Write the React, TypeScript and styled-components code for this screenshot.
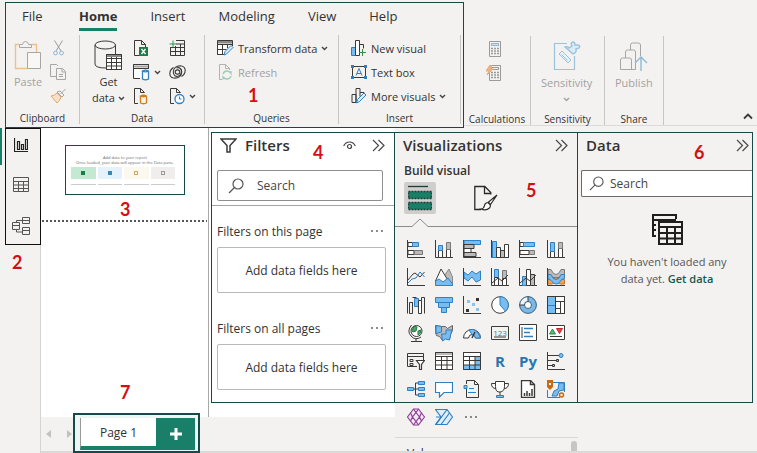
import React from "react";
import styled, { createGlobalStyle } from "styled-components";

const color = {
  chrome: "#f3f2f1",
  frame: "#17494a",
  accent: "#1a7f68",
  ink: "#333231",
  muted: "#a3a19f",
  blue: "#2f7fc1",
  fill: "#79bdf0",
  grey: "#bdbbb9",
  mark: "#d40f14",
};

const GlobalStyle = createGlobalStyle`
  *, *::before, *::after { box-sizing: border-box; }
  body { margin: 0; background: ${color.chrome}; }
  body, button, input { font-family: "Open Sans", "Noto Sans", sans-serif; font-size: 12px; color: ${color.ink}; }
  button { border: 0; padding: 0; background: none; cursor: pointer; }
  svg { display: block; flex: none; }
  h2, h3, p { margin: 0; }
`;

/* ---------- shell ---------- */

const Shell = styled.div`
  height: 100vh;
  min-height: 440px;
  display: flex;
  flex-direction: column;
  overflow: hidden;
  background: ${color.chrome};
`;

const Ribbon = styled.header`
  display: flex;
  align-items: stretch;
  height: 126px;
  margin-top: 2px;
  padding-left: 5px;
`;

const FramedRibbon = styled.div`
  position: relative;
  display: flex;
  flex-direction: column;
  width: 459px;
  border: 1px solid ${color.frame};
`;

const PlainRibbon = styled.div`
  flex: 1;
  display: flex;
  flex-direction: column;
  justify-content: flex-end;
  margin-bottom: 2px;
  border-bottom: 1px solid #dddbd9;
`;

const TabBar = styled.nav`
  display: flex;
  gap: 33px;
  height: 32px;
  padding: 0 16px;
`;

const Tab = styled.button<{ $active?: boolean }>`
  height: 28px;
  min-width: 24px;
  text-align: left;
  font-size: 13px;
  font-weight: ${(p) => (p.$active ? 700 : 400)};
  border-bottom: 3px solid ${(p) => (p.$active ? color.accent : "transparent")};
`;

const Groups = styled.div`
  display: flex;
  height: 89px;
`;

const Group = styled.section<{ $width: number }>`
  display: flex;
  flex-direction: column;
  width: ${(p) => p.$width}px;
  border-right: 1px solid #c8c6c4;
`;

const GroupBody = styled.div<{ $gap?: number; $pad?: number }>`
  flex: 1;
  display: flex;
  gap: ${(p) => p.$gap ?? 8}px;
  padding: 1px 0 0 ${(p) => p.$pad ?? 8}px;
`;

const GroupLabel = styled.div`
  height: 16px;
  font-size: 10px;
  line-height: 20px;
  text-align: center;
`;

const Stack = styled.div<{ $align?: string }>`
  display: flex;
  flex-direction: column;
  align-items: ${(p) => p.$align ?? "flex-start"};
`;

const Command = styled.button<{ $off?: boolean }>`
  display: flex;
  align-items: center;
  gap: 4px;
  height: 24px;
  font-size: 11px;
  white-space: nowrap;
  color: ${(p) => (p.$off ? color.muted : color.ink)};
`;

const BigCommand = styled.button<{ $off?: boolean }>`
  display: flex;
  flex-direction: column;
  align-items: center;
  height: 72px;
  padding-top: 4px;
  font-size: 11px;
  line-height: 16px;
  color: ${(p) => (p.$off ? color.muted : color.ink)};
  svg + span { margin-top: 4px; }
`;

const Inline = styled.span`
  display: flex;
  align-items: center;
  gap: 3px;
`;

const CaretLine = styled(Inline)`
  height: 16px;
`;

const Spacer = styled.span`
  flex: 1;
`;

const CollapseRow = styled.div`
  flex: 1;
  display: flex;
  align-items: flex-end;
  justify-content: flex-end;
  padding: 0 4px 5px;
`;

/* ---------- workspace ---------- */

const Workspace = styled.main`
  flex: 1;
  min-height: 0;
  display: flex;
`;

const Rail = styled.nav`
  width: 40px;
  padding-left: 3px;
  border-left: 2px solid transparent;
  background: linear-gradient(${color.accent}, ${color.accent}) border-box 0 0 / 2px 37px no-repeat;
`;

const RailFrame = styled.div`
  position: relative;
  display: flex;
  flex-direction: column;
  justify-content: space-between;
  align-items: center;
  width: 36px;
  height: 117px;
  padding: 9px 4px 9px 0;
  border: 1px solid #111;
  z-index: 1;
`;

const RailButton = styled.button`
  display: block;
`;

const Center = styled.div`
  flex: 1;
  min-width: 0;
  display: flex;
  flex-direction: column;
  border-left: 1px solid #d6d4d2;
`;

const CenterTop = styled.div`
  flex: 1;
  min-height: 0;
  display: flex;
  background: #fff;
`;

const Canvas = styled.section`
  position: relative;
  flex: 1;
  padding: 17px 23px 0 24px;
  border-right: 1px solid #a9a8a7;
`;

const Thumb = styled.div`
  display: flex;
  flex-direction: column;
  align-items: center;
  height: 50px;
  padding-top: 9px;
  border: 1px solid ${color.frame};
`;

const ThumbText = styled.p`
  font-size: 4px;
  line-height: 5px;
  color: #666;
  white-space: nowrap;
`;

const ThumbCards = styled.div`
  display: grid;
  grid-template-columns: repeat(4, 1fr);
  gap: 2px;
  align-self: stretch;
  margin: 2px 9px 2px 5px;
`;

const ThumbCard = styled.div<{ $bg: string }>`
  height: 18px;
  display: flex;
  align-items: flex-start;
  justify-content: center;
  padding-top: 4px;
  border-bottom: 1px solid #ccc;
  background: linear-gradient(${(p) => p.$bg}, ${(p) => p.$bg}) 0 0 / 100% 12px no-repeat;
`;

const Chip = styled.i<{ $c: string }>`
  width: 4px;
  height: 4px;
  border: 1px solid ${(p) => p.$c};
`;

const SolidChip = styled(Chip)`
  background: ${(p) => p.$c};
`;

const DottedRule = styled.hr`
  margin: 25px -22px 0 -23px;
  border: 0;
  height: 2px;
  background: repeating-linear-gradient(90deg, #555 0 2px, transparent 2px 4px);
`;

const BottomBar = styled.footer`
  display: flex;
  align-items: flex-end;
  height: 36px;
  border-bottom: 2px solid #dcdad8;
`;

const Arrows = styled.div`
  display: flex;
  justify-content: space-between;
  width: 32px;
  height: 34px;
  padding: 0 1px 0 5px;
  align-items: center;
`;

const PageTabs = styled.div`
  position: relative;
  display: flex;
  height: 40px;
  margin-bottom: -2px;
  padding: 3px 3px 1px 5px;
  border: 2px solid ${color.frame};
  background: #eef5f5;
`;

const PageTab = styled.button`
  width: 76px;
  background: #fff;
  border-left: 1px solid #999;
  border-bottom: 4px solid ${color.accent};
`;

const AddPage = styled.button`
  display: grid;
  place-items: center;
  width: 39px;
  background: ${color.accent};
`;

/* ---------- panes ---------- */

const FilterPane = styled.aside`
  width: 186px;
  padding: 4px 0 0 2px;
`;

const Frame = styled.div<{ $edge?: boolean; $bg: string }>`
  position: relative;
  height: 271px;
  border: 1px solid ${color.frame};
  border-left-width: ${(p) => (p.$edge ? 1 : 0)}px;
  background: ${(p) => p.$bg};
`;

const PaneHead = styled.div<{ $end?: number }>`
  display: flex;
  align-items: center;
  height: 24px;
  padding: 0 ${(p) => p.$end ?? 9}px 0 8px;
`;

const Title = styled.h2`
  font-size: 15px;
  font-weight: 600;
  line-height: 24px;
  svg + & { margin-left: 8px; }
`;

const HeadActions = styled.div`
  display: flex;
  align-items: center;
  gap: 16px;
`;

const Search = styled.label<{ $open?: boolean }>`
  display: flex;
  align-items: center;
  gap: ${(p) => (p.$open ? 6 : 13)}px;
  height: ${(p) => (p.$open ? 27 : 31)}px;
  margin: 13px ${(p) => (p.$open ? 0 : 11)}px 0 ${(p) => (p.$open ? 3 : 5)}px;
  padding-left: ${(p) => (p.$open ? 7 : 10)}px;
  border: 1px solid ${(p) => (p.$open ? "#6c6b6a" : "#8f8e8d")};
  border-right-width: ${(p) => (p.$open ? 0 : 1)}px;
  border-radius: ${(p) => (p.$open ? "2px 0 0 2px" : "2px")};
  background: #fff;
`;

const SearchInput = styled.input`
  flex: 1;
  min-width: 0;
  padding: 0;
  border: 0;
  outline: 0;
  background: none;
  &::placeholder { color: #444; opacity: 1; }
`;

const PaneRule = styled.hr`
  height: 1px;
  margin: 4px 0 0;
  border: 0;
  background: #a5a4a3;
`;

const FilterHead = styled.div`
  display: flex;
  align-items: center;
  justify-content: space-between;
  height: 16px;
  padding: 0 11px 0 5px;
`;

const FilterSet = styled.section`
  margin-top: 17px;
  & + & { margin-top: 27px; }
`;

const SetTitle = styled.h3`
  font-size: 12px;
  font-weight: 400;
`;

const DropZone = styled.div`
  display: grid;
  place-items: center;
  height: 46px;
  margin: 8px 8px 0 5px;
  border: 1px solid #bbb9b8;
  border-radius: 2px;
`;

const VisualPane = styled.aside`
  display: flex;
  flex-direction: column;
  width: 183px;
  padding-top: 4px;
  overflow: hidden;
  border-bottom: 2px solid #dcdad8;
`;

const BuildLabel = styled.h3`
  padding-left: 9px;
  margin-top: 4px;
  font-size: 12px;
  font-weight: 600;
  line-height: 20px;
`;

const ModeRow = styled.div`
  display: flex;
  gap: 38px;
  margin-top: 1px;
  padding-left: 9px;
`;

const Mode = styled.button<{ $active?: boolean }>`
  display: grid;
  place-items: center;
  width: ${(p) => (p.$active ? 32 : 24)}px;
  height: 32px;
  border-radius: 2px;
  background: ${(p) => (p.$active ? "#d0cecc" : "none")};
`;

const Notch = styled.div`
  display: flex;
  align-items: flex-end;
  height: 9px;
  margin-top: 4px;
  &::before, &::after { content: ""; height: 1px; background: #8d8c8b; }
  &::before { width: 17px; }
  &::after { flex: 1; }
`;

const Gallery = styled.div`
  display: grid;
  grid-template-columns: repeat(6, 18px);
  gap: 10px;
  padding: 13px 0 0 12px;
`;

const GalleryTail = styled(Gallery)`
  padding: 5px 0 11px 12px;
  border-bottom: 1px solid #dad8d6;
`;

const Tile = styled.button`
  width: 18px;
  height: 18px;
`;

const Wells = styled.div`
  flex: 1;
  display: flex;
  justify-content: space-between;
  padding: 3px 1px 0 12px;
  overflow: hidden;
`;

const WellTitle = styled.h3`
  padding-top: 4px;
  font-size: 12px;
  line-height: 18px;
  font-weight: 400;
`;

const Thumbbar = styled.div`
  width: 6px;
  height: 30px;
  border-radius: 3px;
  background: #c8c6c4;
`;

const DataPane = styled.aside`
  width: 179px;
  padding: 4px 4px 0 0;
  border-bottom: 2px solid #dcdad8;
`;

const Empty = styled.div`
  display: flex;
  flex-direction: column;
  align-items: center;
  padding: 16px 0 0 4px;
  text-align: center;
  font-size: 11px;
  line-height: 17px;
  color: #555;
`;

const EmptyText = styled.p`
  width: 140px;
  margin-top: 7px;
`;

const Link = styled.a`
  color: #17594b;
  font-weight: 600;
  text-decoration: none;
`;

/* numbered callouts laid over the regions */
const Mark = styled.span<{ $x: number; $y: number }>`
  position: absolute;
  left: ${(p) => p.$x}px;
  top: ${(p) => p.$y}px;
  font: 700 18px/20px Lato, sans-serif;
  color: ${color.mark};
`;

/* ---------- icons ---------- */

type IconProps = { w?: number; h?: number; c?: string; vb?: string; children: React.ReactNode };
const Icon = ({ w = 18, h = w, c = "#3b3a39", vb, children }: IconProps) => (
  <svg width={w} height={h} viewBox={vb ?? `0 0 ${w} ${h}`} fill="none" stroke={c} strokeWidth="1" aria-hidden="true">
    {children}
  </svg>
);

const Caret = ({ c = "#444" }: { c?: string }) => (
  <Icon w={7} h={5} c={c}><path d="M1 1l2.5 2.5L6 1" strokeWidth="1.4" /></Icon>
);
const Chevrons = () => (
  <Icon w={13} h={13} c="#4a4948"><path d="M1 1l5.500 5.500L1 12M6.500 1L12 6.500 6.500 12" strokeWidth="1.2" /></Icon>
);
const Lens = ({ s = 16 }: { s?: number }) => (
  <Icon w={s} h={s} vb="0 0 16 16" c="#555"><circle cx="10" cy="6" r="5" strokeWidth="1.2" /><path d="M6.500 9.500L1 15" strokeWidth="1.2" /></Icon>
);
const Dots = ({ w = 12 }: { w?: number }) => (
  <Icon w={w} h={4} vb="0 0 12 4"><g fill="#555" stroke="none"><circle cx="1" cy="2" r=".9" /><circle cx="6" cy="2" r=".9" /><circle cx="11" cy="2" r=".9" /></g></Icon>
);

const PasteIcon = () => (
  <Icon w={28} h={30} c="#a8a6a4">
    <path d="M5 4.500H1.500V28.500H14M18 4.500h4.500V12" stroke="#edc08f" strokeWidth="1.400" />
    <path d="M5.500 7.500V4.500h3Q9 1.500 11.500 1.500T14.500 4.500h3v3z" />
    <path d="M13.500 12.500h13v16h-13z" fill="#f8f7f6" />
  </Icon>
);
const CutIcon = () => (
  <Icon w={11} h={16} c="#9b9a99">
    <path d="M1.500 .5L8 11M9.500 .5L3 11" />
    <circle cx="2.500" cy="13" r="1.900" stroke="#8fb6d4" /><circle cx="8.500" cy="13" r="1.900" stroke="#8fb6d4" />
  </Icon>
);
const CopyIcon = () => (
  <Icon w={17} h={17} c="#a8a6a4">
    <path d="M6 12.500H.5V.5h6L8 2M6.500 4.500h6l3 3v8h-9zM12 4.500V8h3.500M9 10.500h4M9 12.500h4" />
  </Icon>
);
const BrushIcon = () => (
  <Icon w={17} h={16} c="#a8a6a4">
    <path d="M15.500 1l-5 5M7 4l5 5 2-2-4-4z" /><path d="M7 5Q4 8 1 8l6 7q3-2 4-6z" stroke="#e3a971" fill="#f6dfc6" />
  </Icon>
);
const DatabaseIcon = () => (
  <Icon w={28} h={30}>
    <path d="M1 5v19q0 4 11 4M21.500 5v9" /><ellipse cx="11.250" cy="5" rx="10.250" ry="4" />
    <path d="M12.500 14.500h15v15h-15z" fill="#fff" /><path d="M12.500 15.500h15" strokeWidth="3" stroke="#8a8987" /><path d="M12.500 14.500h15v15h-15zM12.500 18.500h15M12.500 22.500h15M12.500 26h15M17.500 17v12M22.500 17v12" />
  </Icon>
);
const ExcelIcon = () => (
  <Icon w={16} h={17}>
    <path d="M6 15.500H1.500V.5h7l4 4V7M8.500 .5v4h4" /><path d="M6 7h9v9H6z" fill="#1b7f45" stroke="none" /><path d="M8.500 9l4 5M12.500 9l-4 5" stroke="#fff" strokeWidth="1.300" />
  </Icon>
);
const HubIcon = () => (
  <Icon w={17} h={17}>
    <path d="M7 14.500H.5V.5h15V5" fill="#fff" /><path d="M1 2.500h14" stroke="#a6a4a2" strokeWidth="2" /><path d="M.5 .5h15V5M.5 4.500h15" />
    <path d="M9.500 7v8q3 1.600 6 0V7q-3-1.600-6 0q3 1.600 6 0" stroke={color.blue} fill="#fff" strokeWidth="1.300" />
  </Icon>
);
const SqlIcon = () => (
  <Icon w={16} h={17}>
    <path d="M5 15.500H1.500V.5h6l4 4M7.500 .5v4h4" /><path d="M7.500 8v7q3 1.500 6 0V8q-3-1.500-6 0q3 1.500 6 0" stroke="#d27c20" fill="#fdf1e2" strokeWidth="1.300" />
  </Icon>
);
const EnterDataIcon = () => (
  <Icon w={17} h={16}>
    <path d="M7 .5h8.500v15H1.500V7M7 4h9M2 7.500h14M2 11.500h14M6.500 6v9M11.500 4v11" /><path d="M4 .5v7M.5 4h7" stroke="#2e9348" />
  </Icon>
);
const DataverseIcon = () => (
  <Icon w={17} h={14}>
    <g strokeWidth="1.100">
      <ellipse cx="8.500" cy="7" rx="2.300" ry="2.100" />
      <path d="M12.500 1C7 .3 4.300 3.500 4.300 7s2.500 5 5.200 4 4-4.500 2.300-7" />
      <path d="M4.500 13c5.500.7 8.200-2.500 8.200-6S10.200 2 7.500 3" />
      <path d="M4.500 13C-.5 12-.3 5.500 4.500 2.500M12.500 1c5 1 4.800 7.500 0 10.500" />
    </g>
  </Icon>
);
const RecentIcon = () => (
  <Icon w={16} h={17}>
    <path d="M5 15.500H1.500V.5h6l4 4M7.500 .5v4h4" /><circle cx="10.500" cy="11" r="4.500" stroke={color.blue} fill="#fff" strokeWidth="1.300" /><path d="M10.500 8.500V11h2" stroke={color.blue} />
  </Icon>
);
const TransformIcon = () => (
  <Icon w={17} h={17}>
    <path d="M7 14.500H.5V1.500h15V6" fill="#fff" /><path d="M.5 2h15" strokeWidth="3" stroke="#8a8987" /><path d="M.5 .5h15V6M.5 .5v14H7M.5 4.500h15M.5 9.500h9M5.500 4v10M10.500 4v4" />
    <path d="M7 15l1-3.500L14 5.500l2 2-6.500 6.500z" stroke={color.blue} fill="#dcedf9" />
  </Icon>
);
const RefreshIcon = () => (
  <Icon w={17} h={17} c="#b5b3b1">
    <path d="M5 15.500H2.500V.5h6l4 4V6M8.500 .5v4h4" /><path d="M6 10q1-3 4-3 2.500 0 4 2.500V7M14 12q-1 3-4 3-2.500 0-4-2v2.500" stroke="#9dcdb2" strokeWidth="1.300" />
  </Icon>
);
const NewVisualIcon = () => (
  <Icon w={16} h={16}>
    <path d="M.5 7.500h4v8h-4z" fill={color.fill} stroke={color.blue} /><path d="M4.500 .5h4v15h-4z" fill="#fff" /><path d="M8.500 4.500h4v4M8.500 15V4.500" /><path d="M11.500 9v7M8 12.500h7" stroke="#2e9348" />
  </Icon>
);
const TextBoxIcon = () => (
  <Icon w={16} h={14}>
    <path d="M1.500 1.500h13v11h-13z" /><g fill={color.blue} stroke="none"><path d="M0 0h3v3H0zM13 0h3v3h-3zM0 11h3v3H0zM13 11h3v3h-3z" /></g><path d="M5 10.500l3-7 3 7M6 8.500h4" stroke={color.blue} />
  </Icon>
);
const MoreVisualsIcon = () => (
  <Icon w={16} h={16}>
    <path d="M5 14.500H1V6.500h4zM5 15V.5h4v8M9 4.500h4V6" /><path d="M5.500 15l1-3.500L13 5l2 2-6.500 6.500z" stroke={color.blue} fill="#dcedf9" />
  </Icon>
);
const CalcIcon = ({ quick }: { quick?: boolean }) => (
  <Icon w={15} h={17} c="#9b9a99">
    <path d="M3.500 .5h11v15h-11zM5.500 2.500h7v2h-7z" /><path d="M5 7.500h8M5 10h8M5 12.500h8" strokeDasharray="2 1" strokeWidth="1.400" />
    {quick ? <path d="M4 0L0 6h3l-2 4 6-6H4l2-4z" fill="#f0b585" stroke="#e8a874" /> : <path d="M5.500 2.500h7v2h-7z" stroke="#8fb6d4" fill="#cfe2f1" />}
  </Icon>
);
const SensitivityIcon = () => (
  <Icon w={28} h={30} c="#9cc2dc">
    <path d="M14 2.500H1.500v26h20V15" strokeWidth="1.200" /><path d="M6 13l3-3 9 9-3 3zM8.500 13.500l6 6" fill="#e6f1f9" />
    <path d="M12 6q3-1 4 1l3-2q-2-3 1-4 2 0 2 3l3 0q3 1 1 3l-3 1q1 2-1 4l-2 1z" fill="#dcecf7" strokeWidth="1.400" />
  </Icon>
);
const PublishIcon = () => (
  <Icon w={28} h={30} c="#a8a6a4">
    <path d="M.5 19q0-2 2-2h7q2 0 2 2v9.500H.5zM5.500 17v-6q0-2 2-2h6q2 0 2 2v17.500H11M10.500 9V4q0-2 2-2h6q2 0 2 2v11" /><path d="M21 30V16M15 22l6-6 6 6" stroke="#8db9d8" strokeWidth="1.400" />
  </Icon>
);

const ReportView = () => (
  <Icon w={14} h={15} c="#222"><path d="M.5 0v13.500H14M3.500 3.500h2v8h-2zM7.500 6.500h2v5h-2zM11.500 1.500h2v10h-2z" strokeWidth="1.200" /></Icon>
);
const TableView = () => (
  <Icon w={17} h={16} c="#555"><path d="M.5 .5h15v14H.5zM.5 4.500h15M.5 8h15M.5 11.500h15M5.500 4v11M10.500 4v11" /></Icon>
);
const ModelView = () => (
  <Icon w={18} h={18} c="#555"><path d="M10.500 .5h7v6h-7zM10.500 3.500h7M.5 5.500h7v7h-7zM.5 8.500h7M10.500 10.500h7v7h-7zM10.500 13.500h7M4.500 5.500V3.500h6M4.500 12.500v2.500h6" /></Icon>
);

const Funnel = () => (
  <Icon w={17} h={15}><path d="M1 1h15l-6 6.500V14H7V7.500z" strokeWidth="1.500" /></Icon>
);
const Eye = () => (
  <Icon w={13} h={9} c="#444"><path d="M.7 5Q2.500 1 6.500 1t5.800 4" strokeWidth="1.200" /><circle cx="6.500" cy="5.500" r="2" strokeWidth="1.200" /></Icon>
);
const BuildIcon = () => (
  <Icon w={24} h={26} c="#1d3b35">
    <path d="M0 1.500h20" strokeWidth="1.300" /><g fill={color.accent} strokeDasharray="2 1"><path d="M.5 6.500h23v7H.5zM.5 17.500h23v7H.5z" strokeWidth="1.300" /></g>
  </Icon>
);
const FormatIcon = () => (
  <Icon w={24} h={26} c="#2b2a29">
    <path d="M7 24.500H.8V1.500h10l6 6v2M10.500 1.500v7h6" strokeWidth="1.300" /><path d="M23 10l-8.500 7 2 2.500zM14 17.500q-3 0-3.500 3T7 24q5 2 8.500-1 1.500-2 .5-3.500z" fill="#fff" strokeWidth="1.200" />
  </Icon>
);
const TablesIcon = () => (
  <Icon w={33} h={33} c="#201f1e">
    <path d="M25 6V2H2v21H5M2 7h23M2 12h3M2 17h3" strokeWidth="2" /><path d="M8 9h23v22H8zM8 14h23M8 20h23M8 25.500h23M16 14v17M24 14v17" strokeWidth="2" fill="#f3f2f1" />
  </Icon>
);

const F = color.fill;
const G = color.grey;
const B = color.blue;
const axes = "M.5 0v17.500H18";

const glyphs: Record<string, React.ReactNode> = {
  "Stacked bar chart": <><path d={axes} /><path d="M1 2.500h5v4H1zM1 10.500h6v4H1z" fill="#fff" /><path d="M5.500 2.500h6v4h-6z" fill={F} stroke={B} /><path d="M7.500 10.500h8v4h-8z" fill={G} stroke="#777" /></>,
  "Stacked column chart": <><path d={axes} /><path d="M3.500 10.500h4v7h-4zM11.500 9.500h4v8h-4z" fill="#fff" /><path d="M3.500 5.500h4v5h-4z" fill={F} stroke={B} /><path d="M11.500 2.500h4v7h-4z" fill={G} stroke="#777" /></>,
  "Clustered bar chart": <><path d={axes} /><path d="M1 .5h16.500v4H1z" fill={F} stroke={B} /><path d="M1 4.500h10v4H1zM1 12.500h12v4H1z" fill={G} /><path d="M1 8.500h7v4H1z" fill="#fff" /></>,
  "Clustered column chart": <><path d={axes} /><path d="M1.500 1.500h4v16h-4z" fill={F} stroke={B} /><path d="M5.500 7.500h4v10h-4z" fill="#fff" /><path d="M9.500 10.500h4v7h-4z" fill={G} /><path d="M13.500 4.500h4v13h-4z" fill="#fff" /></>,
  "100% stacked bar chart": <><path d={axes} /><path d="M1 2.500h5v4H1zM1 10.500h9v4H1z" fill="#fff" /><path d="M4.500 2.500h11v4h-11z" fill={F} stroke={B} /><path d="M10.500 10.500h5v4h-5z" fill={G} stroke="#777" /></>,
  "100% stacked column chart": <><path d={axes} /><path d="M3.500 11.500h4v6h-4zM11.500 8.500h4v9h-4z" fill="#fff" /><path d="M3.500 2.500h4v9h-4z" fill={F} stroke={B} /><path d="M11.500 2.500h4v6h-4z" fill={G} stroke="#777" /></>,
  "Line chart": <><path d={axes} /><path d="M1 12l5-6 2-1 5 4 4.500-5" /><path d="M1 15l4-4 4-1 4-6 4.500 5" stroke={B} /></>,
  "Area chart": <><path d="M9 17V8l5-7 3.500 8v8z" fill={G} stroke="#888" /><path d="M.5 13L6 1l8 13-8 3z" fill="#fff" /><path d="M.5 17.500V13L4 11l4 3 5-4 4.500 6v1.500z" fill={F} stroke={B} /></>,
  "Stacked area chart": <><path d="M1 4l4 3 4-4 4 3 4.500-3v9L13 14l-4-5-4 4-4-3z" fill={F} stroke={B} /><path d={axes} /></>,
  "Line and stacked column chart": <><path d={axes} /><path d="M3.500 1.500h4v8h-4z" fill={F} stroke={B} /><path d="M11.500 2.500h4v8h-4z" fill={G} stroke="#777" /><path d="M3.500 9.500h4v8h-4zM11.500 10.500h4v7h-4z" fill="#fff" /><path d="M1 15l6-5 4 3 6-6" /></>,
  "Line and clustered column chart": <><path d={axes} /><path d="M3.500 8.500h4v9h-4z" fill={F} stroke={B} /><path d="M7.500 1.500h4v16h-4z" fill="#fff" /><path d="M11.500 6.500h4v11h-4z" fill={G} /><path d="M1 15l6-5 4 3 6-6" /></>,
  "Ribbon chart": <><path d="M1 1.500h3q2 5 5 5t5-5h3.500v5q-4 0-5 3h-7q-1-3-4.500-3z" fill={G} stroke="#777" /><path d="M1 11.500h4l4-2 4 2h4.500v4.500H13l-4-2-4 2H1z" fill="#f0a259" stroke="#c9762a" /><path d="M1 6.500h3q2 5 5 5t5-5h3.500v4q-3 0-4.500 3t-4 2.500-4-2.500-4-3z" fill={F} stroke={B} /><path d={axes} /></>,
  "Waterfall chart": <><path d="M.5 1v16.500M17.500 17.500V1.500h-3v16M2.500 6.500h3v11h-3zM5.500 1.500h4" /><path d="M7.500 2.500h4v8h-4z" fill={F} stroke={B} /><path d="M11.500 4.500h3v13h-3z" fill="#fff" /><path d="M5.500 6v11" /></>,
  "Funnel chart": <path d="M.5 1.500h17v5H.5zM3.500 6.500h11v5h-11zM6.500 11.500h5v5h-5z" fill={F} stroke={B} />,
  "Scatter chart": <><path d={axes} /><g stroke="none"><path d="M13 2h3v3h-3zM3 13h3v3H3z" fill="#333" /><path d="M4 4h3v3H4zM9 7h3v3H9zM13 12h3v3h-3z" fill="#8cc3ea" /></g></>,
  "Pie chart": <><circle cx="9" cy="9" r="8.300" fill="#fff" /><path d="M9 .7A8.300 8.300 0 0 1 14.500 15.200L9 9z" fill={F} stroke={B} /></>,
  "Donut chart": <><circle cx="9" cy="9" r="6" stroke="#7ab8e6" strokeWidth="5" /><path d="M3 9A6 6 0 0 1 9 3" stroke="#f4f4f4" strokeWidth="4" /><circle cx="9" cy="9" r="8.400" stroke="#38617f" /><circle cx="9" cy="9" r="3.500" fill="#fff" stroke="#38617f" /><path d="M9 .5v5M.5 9h5" /></>,
  Treemap: <><path d="M.5 .5h17v17H.5z" fill="#fff" /><path d="M.5 .5h8v9h-8zM.5 9.500h8v8h-8z" fill={F} stroke={B} /><path d="M.5 .5h17v17H.5zM8.500 0v18M9 5.500h9M13.500 6v12M9 12.500h5" /></>,
  Map: <><circle cx="9.500" cy="7" r="5.500" fill="#fff" /><path d="M6 4q2-3 4-1l-1 4-3 1q-2-1 0-4zM11 7l3-1q0 4-3 5z" fill="#4ea36a" stroke="#2b7d47" /><path d="M4.500 1Q-.5 7 4 12t10 1M9 14.500v3M4 17.500h11" /></>,
  "Filled map": <><path d="M.5 1.500l6 1 4 0 2 2 5-3v5l-2 4-1 5-4-1-3 2-3-4-3-1Q-.5 8 .5 1.500z" fill={G} stroke="#666" /><path d="M1 1.500l5.500 1V8L1 9.500zM6.500 10H11V6h6l-1.500 5-1 5-4-1-3 2z" fill={F} stroke={B} /></>,
  Gauge: <><path d="M.5 14A8.500 8.500 0 0 1 17.500 14h-5Q12 10.500 9 10.500T5.500 14z" fill="#fff" /><path d="M6 6q7-3 11.500 8h-5Q12 11 9 10.500z" fill={F} stroke={B} /><path d="M9 14l3-6" strokeWidth="1.500" /></>,
  Card: <><path d="M.5 2.500h17v13H.5zM3 13h12" /><text x="9" y="11.500" textAnchor="middle" fontSize="8" fontFamily="Open Sans" fill={B} stroke="none">123</text></>,
  "Multi-row card": <><path d="M.5 .5h17v16H.5z" fill="#fff" /><path d="M3 3v11" /><path d="M5 4.500h9M5 8.500h6M5 12.500h9" stroke={B} strokeWidth="1.600" /></>,
  KPI: <><path d="M.5 1.500h17v14H.5z" fill="#fff" /><path d="M2.500 10L5.500 5l3 5z" fill="#5fb877" stroke="#2b8a4a" /><path d="M9.500 4.500h6l-3 5z" fill="#e0474a" stroke="#c4262e" /><path d="M3 12.500h12" /></>,
  Slicer: <><path d="M10 14.500H.5V1.500h16V8M.5 4.500h16M3 7.500h3v2H3zM3 11.500h3v2H3z" /><path d="M9.500 8.500h8l-3 4v5h-2v-5z" fill="#fff" strokeWidth="1.200" /></>,
  Table: <><path d="M.5 .5h17v17H.5z" fill="#fff" /><path d="M1 2h16" stroke={G} strokeWidth="2" /><path d="M.5 .5h17v17H.5zM.5 4.500h17M.5 8.500h17M.5 13h17M6.500 4v13M12 4v13" /></>,
  Matrix: <><path d="M.5 .5h17v17H.5z" fill="#fff" /><path d="M12 4h5.500v13.500H.5V13H12z" fill={F} stroke="none" /><path d="M.5 .5h17v17H.5zM.5 4.500h17M.5 8.500h17M.5 13h17M6.500 4v13M12 4v13" /></>,
  "Key influencers": <><path d={axes} /><path d="M1 3.500h11M1 8.500h8M1 13.500h4" /><circle cx="14" cy="3.500" r="2" fill={F} stroke={B} /><path d="M9.500 7.500h2v2h-2zM5.500 12.500h2v2h-2z" fill={G} /></>,
  "Decomposition tree": <><path d="M6 9h5M8.500 3v12M8.500 3H11M8.500 15H11" /><path d="M.5 7.500h6v3h-6zM11.500 1.500h6v3h-6zM11.500 7.500h6v3h-6zM11.500 13.500h6v3h-6z" fill={F} stroke={B} /></>,
  "Q&A": <path d="M.5 2.500h17v10H9L4.500 17v-4.500h-4z" fill="#fff" stroke={B} strokeWidth="1.200" />,
  Narrative: <><path d="M3.500 4V.5h8l4 4v13h-12V9M11.500 .5v4h4" /><path d="M1 5.500h3v3H1z" fill={F} stroke={B} /><path d="M6 8.500h5M5 12.500h8" stroke={B} /></>,
  Goals: <><path d="M4.500 1.500h9v5q0 5-4.500 5.500T4.500 6.500zM4.500 3.500h-4q0 5 4.500 5M13.500 3.500h4q0 5-4.500 5M9 12v3" fill="#fff" /><path d="M5.500 15.500h7v2h-7z" fill={F} stroke={B} /></>,
  "Paginated report": <><path d="M2.500 .5h9l4 4v13h-13z" fill="#fff" strokeWidth="1.300" /><path d="M11.500 .5v4h4M5.500 16v-3M8 16v-5M10.500 16v-3M13 16V9" strokeWidth="1.500" /></>,
  "ArcGIS map": <><path d="M5 2.500h12.500V12M13 17.500H.5V10" stroke={B} /><path d="M17 3v7l-5 1-2 5H5l2-5 4-2 1-6z" fill={F} stroke={B} /><path d="M0 0h6v7L3 10 0 7z" fill="#c96a10" stroke="none" /><path d="M2 3h2v2H2z" fill="#fff" stroke="none" /><circle cx="14.500" cy="15" r="2" stroke="#c96a10" strokeWidth="1.500" /></>,
  "Power Apps": <g stroke="#8b3f93" strokeWidth="1.200"><path d="M6.500 1h5l6 8-6 8h-5l-6-8z" fill="#f6e6f7" /><path d="M6.500 1L9 4.500 11.500 1M6.500 17L9 13.500l2.500 3.500M9 4.500L12.500 9 9 13.500 5.500 9zM3.500 5l2 4-2 4M14.500 5l-2 4 2 4" /></g>,
  "Power Automate": <g stroke={B} strokeWidth="1.200"><path d="M.5 1.500h11.500l5.500 7.500-5.500 7.500H.5L6 9z" fill="#ddeefa" /><path d="M12 1.500L1 16.500M14.500 5L6 16.500M6 9H1" /></g>,
};

const order = Object.keys(glyphs);
const gridNames = [...order.slice(0, 27), "R script visual", "Python visual", ...order.slice(27, 34)];
const tailNames = order.slice(34);

const ScriptTile = styled(Tile)`
  display: grid;
  place-items: center;
  font-size: 15px;
  line-height: 18px;
  font-weight: 700;
  color: #2878ad;
`;

const VisualTile = ({ name }: { name: string }) =>
  glyphs[name] ? (
    <Tile aria-label={name}><Icon>{glyphs[name]}</Icon></Tile>
  ) : (
    <ScriptTile aria-label={name}>{name[0] === "R" ? "R" : "Py"}</ScriptTile>
  );

export default function App() {
  return (
    <>
      <GlobalStyle />
      <Shell>
        <Ribbon>
          <FramedRibbon>
            <TabBar aria-label="Ribbon tabs">
              {["File", "Home", "Insert", "Modeling", "View", "Help"].map((t) => (
                <Tab key={t} $active={t === "Home"}>{t}</Tab>
              ))}
            </TabBar>
            <Groups>
              <Group $width={74}>
                <GroupBody>
                  <BigCommand $off><PasteIcon /><span>Paste</span></BigCommand>
                  <Stack $align="center">
                    <Command aria-label="Cut"><CutIcon /></Command>
                    <Command aria-label="Copy"><CopyIcon /></Command>
                    <Command aria-label="Format painter"><BrushIcon /></Command>
                  </Stack>
                </GroupBody>
                <GroupLabel>Clipboard</GroupLabel>
              </Group>
              <Group $width={125}>
                <GroupBody $pad={12}>
                  <BigCommand><DatabaseIcon /><span>Get</span><Inline>data <Caret /></Inline></BigCommand>
                  <Stack>
                    <Command aria-label="Excel workbook"><ExcelIcon /></Command>
                    <Command aria-label="OneLake data hub"><HubIcon /><Caret /></Command>
                    <Command aria-label="SQL Server"><SqlIcon /></Command>
                  </Stack>
                  <Stack>
                    <Command aria-label="Enter data"><EnterDataIcon /></Command>
                    <Command aria-label="Dataverse"><DataverseIcon /></Command>
                    <Command aria-label="Recent sources"><RecentIcon /><Caret /></Command>
                  </Stack>
                </GroupBody>
                <GroupLabel>Data</GroupLabel>
              </Group>
              <Group $width={134}>
                <GroupBody $pad={12}>
                  <Stack>
                    <Command><TransformIcon />Transform data <Caret /></Command>
                    <Command $off><RefreshIcon />Refresh</Command>
                  </Stack>
                </GroupBody>
                <GroupLabel>Queries</GroupLabel>
              </Group>
              <Group $width={122}>
                <GroupBody $pad={12}>
                  <Stack>
                    <Command><NewVisualIcon />New visual</Command>
                    <Command><TextBoxIcon />Text box</Command>
                    <Command><MoreVisualsIcon />More visuals <Caret /></Command>
                  </Stack>
                </GroupBody>
                <GroupLabel>Insert</GroupLabel>
              </Group>
            </Groups>
            <Mark $x={242} $y={82}>1</Mark>
          </FramedRibbon>
          <PlainRibbon>
            <Groups>
              <Group $width={67}>
                <GroupBody $pad={22}>
                  <Stack>
                    <Command aria-label="New measure"><CalcIcon /></Command>
                    <Command aria-label="Quick measure"><CalcIcon quick /></Command>
                  </Stack>
                </GroupBody>
                <GroupLabel>Calculations</GroupLabel>
              </Group>
              <Group $width={74}>
                <GroupBody $pad={10}>
                  <BigCommand $off><SensitivityIcon /><span>Sensitivity</span><CaretLine><Caret c="#a3a19f" /></CaretLine></BigCommand>
                </GroupBody>
                <GroupLabel>Sensitivity</GroupLabel>
              </Group>
              <Group $width={59}>
                <GroupBody $pad={10}>
                  <BigCommand $off><PublishIcon /><span>Publish</span></BigCommand>
                </GroupBody>
                <GroupLabel>Share</GroupLabel>
              </Group>
              <CollapseRow>
                <button aria-label="Collapse ribbon"><Icon w={10} h={7}><path d="M1 5.500l4-4 4 4" strokeWidth="1.800" /></Icon></button>
              </CollapseRow>
            </Groups>
          </PlainRibbon>
        </Ribbon>

        <Workspace>
          <Rail aria-label="Views">
            <RailFrame>
              <RailButton aria-label="Report view"><ReportView /></RailButton>
              <RailButton aria-label="Table view"><TableView /></RailButton>
              <RailButton aria-label="Model view"><ModelView /></RailButton>
              <Mark $x={6} $y={123}>2</Mark>
            </RailFrame>
          </Rail>

          <Center>
            <CenterTop>
              <Canvas>
                <Thumb>
                  <ThumbText>Add data to your report</ThumbText>
                  <ThumbText>Once loaded, your data will appear in the Data pane.</ThumbText>
                  <ThumbCards>
                    <ThumbCard $bg="#c3e9d3"><SolidChip $c="#1b7f45" /></ThumbCard>
                    <ThumbCard $bg="#e6f2fb"><SolidChip $c="#3a86b8" /></ThumbCard>
                    <ThumbCard $bg="#fdf8ee"><Chip $c="#cfa96c" /></ThumbCard>
                    <ThumbCard $bg="#efeeed"><Chip $c="#9b9a99" /></ThumbCard>
                  </ThumbCards>
                </Thumb>
                <DottedRule />
                <Mark $x={79} $y={71}>3</Mark>
                <Mark $x={79} $y={254}>7</Mark>
              </Canvas>
              <FilterPane>
                <Frame $edge $bg="#fff">
                  <PaneHead>
                    <Funnel />
                    <Title>Filters</Title>
                    <Spacer />
                    <HeadActions>
                      <button aria-label="Show filters"><Eye /></button>
                      <button aria-label="Collapse filters"><Chevrons /></button>
                    </HeadActions>
                  </PaneHead>
                  <Search><Lens /><SearchInput aria-label="Search filters" placeholder="Search" /></Search>
                  <PaneRule />
                  {["Filters on this page", "Filters on all pages"].map((t) => (
                    <FilterSet key={t}>
                      <FilterHead><SetTitle>{t}</SetTitle><button aria-label={`${t} options`}><Dots /></button></FilterHead>
                      <DropZone>Add data fields here</DropZone>
                    </FilterSet>
                  ))}
                  <Mark $x={101} $y={9}>4</Mark>
                </Frame>
              </FilterPane>
            </CenterTop>
            <BottomBar>
              <Arrows>
                <button aria-label="Previous page"><Icon w={5} h={8}><path d="M5 0v8L0 4z" fill="#c4c2c0" stroke="none" /></Icon></button>
                <button aria-label="Next page"><Icon w={5} h={8}><path d="M0 0v8l5-4z" fill="#c4c2c0" stroke="none" /></Icon></button>
              </Arrows>
              <PageTabs>
                <PageTab>Page 1</PageTab>
                <AddPage aria-label="New page"><Icon w={12} c="#fff"><path d="M6 0v12M0 6h12" strokeWidth="3" /></Icon></AddPage>
              </PageTabs>
            </BottomBar>
          </Center>

          <VisualPane>
            <Frame $bg={color.chrome}>
              <PaneHead>
                <Title>Visualizations</Title>
                <Spacer />
                <button aria-label="Collapse visualizations"><Chevrons /></button>
              </PaneHead>
              <BuildLabel>Build visual</BuildLabel>
              <ModeRow>
                <Mode $active aria-label="Build visual"><BuildIcon /></Mode>
                <Mode aria-label="Format visual"><FormatIcon /></Mode>
              </ModeRow>
              <Notch><Icon w={16} h={9} c="#8d8c8b"><path d="M0 8.500L8 1l8 7.500" /></Icon></Notch>
              <Gallery>{gridNames.map((n) => <VisualTile key={n} name={n} />)}</Gallery>
              <Mark $x={131} $y={47}>5</Mark>
            </Frame>
            <GalleryTail>
              {tailNames.map((n) => <VisualTile key={n} name={n} />)}
              <Tile aria-label="More visuals"><Dots w={16} /></Tile>
            </GalleryTail>
            <Wells><WellTitle>Values</WellTitle><Thumbbar /></Wells>
          </VisualPane>

          <DataPane>
            <Frame $bg={color.chrome}>
              <PaneHead $end={3}>
                <Title>Data</Title>
                <Spacer />
                <button aria-label="Collapse data"><Chevrons /></button>
              </PaneHead>
              <Search $open><Lens s={15} /><SearchInput aria-label="Search data" placeholder="Search" /></Search>
              <Empty>
                <TablesIcon />
                <EmptyText>You haven't loaded any data yet. <Link href="#get-data">Get data</Link></EmptyText>
              </Empty>
              <Mark $x={116} $y={9}>6</Mark>
            </Frame>
          </DataPane>
        </Workspace>
      </Shell>
    </>
  );
}
